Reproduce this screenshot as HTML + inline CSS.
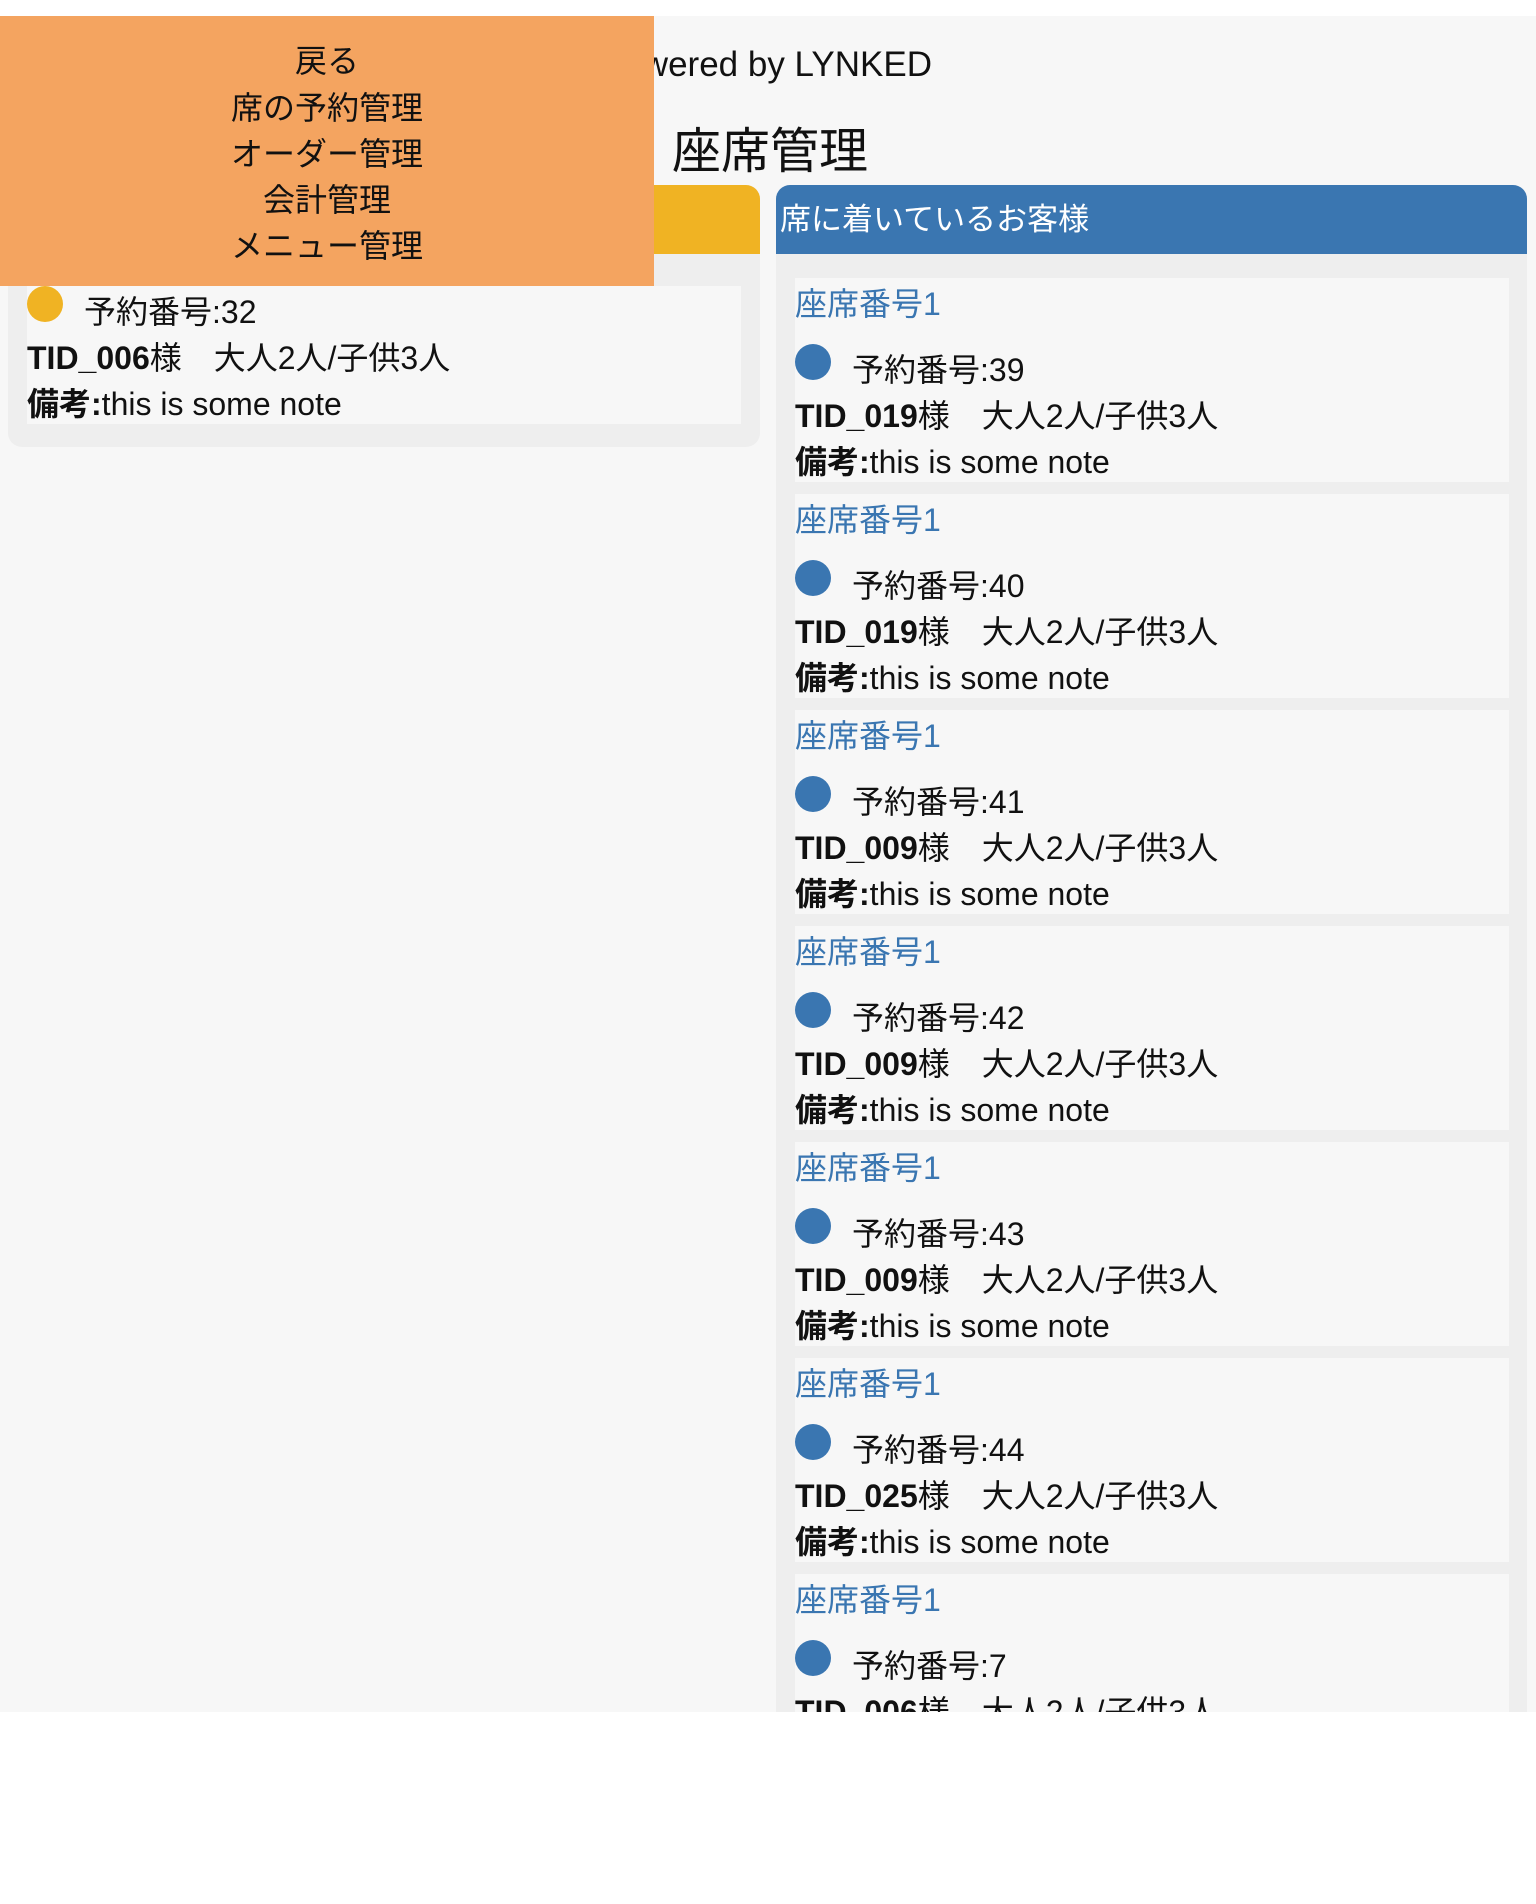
<!DOCTYPE html>
<html><head><meta charset="utf-8"><style>
*{margin:0;padding:0;box-sizing:border-box}
body{width:1536px;height:1904px;background:#fff;font-family:"Liberation Sans","Noto Sans CJK JP",sans-serif;position:relative;overflow:hidden;color:#111}
#page{position:absolute;left:0;top:16px;width:1536px;height:1696px;background:#f7f7f7;overflow:hidden}
.abs{position:absolute;white-space:nowrap}
.panel{position:absolute;background:#eeeeee;border-radius:14px;overflow:hidden}
.hd{height:69px;color:#fff;font-size:31px;line-height:69px;padding-left:4px}
.card{position:absolute;background:#f7f7f7;font-size:32px}
.card .l{position:absolute;left:0;white-space:nowrap;line-height:40px}
.dot{position:absolute;left:0;width:36px;height:36px;border-radius:50%}
b{font-weight:bold}
#menu{position:absolute;left:0;top:16px;width:654px;height:270px;background:#f4a460;text-align:center;font-size:32px}
#menu div{position:absolute;left:0;width:654px;line-height:40px}
</style></head><body>
<div id="page">
 <div class="abs" style="left:600px;top:26px;font-size:35px;line-height:46px">Powered by LYNKED</div>
 <div class="abs" style="left:672px;top:106px;font-size:49px;line-height:60px">座席管理</div>
 <div class="panel" style="left:8px;top:169px;width:752px;height:262px">
  <div class="hd" style="background:#f0b323">予約のお客様</div>
  <div class="card" style="left:19px;top:101px;width:714px;height:138px">
   <div class="dot" style="background:#f0b323;top:0px"></div>
   <div class="l" style="left:57px;top:6px">予約番号:32</div>
   <div class="l" style="top:52px"><b>TID_006</b>様　大人2人/子供3人</div>
   <div class="l" style="top:98px"><b>備考:</b>this is some note</div>
  </div>
 </div>
 <div class="panel" style="left:776px;top:169px;width:751px;height:1700px">
  <div class="hd" style="background:#3a76b1">席に着いているお客様</div>
 </div>
</div>
<div id="menu">
 <div style="top:25px">戻る</div>
 <div style="top:72px">席の予約管理</div>
 <div style="top:118px">オーダー管理</div>
 <div style="top:164px">会計管理</div>
 <div style="top:210px">メニュー管理</div>
</div>
<div id="cards" style="position:absolute;left:0;top:0;width:1536px;height:1712px;overflow:hidden">
</div>
<script>
var d=[["39","019"],["40","019"],["41","009"],["42","009"],["43","009"],["44","025"],["7","006"]];
var h="";
d.forEach(function(x,i){var t=278+i*216;
h+='<div class="card" style="left:795px;top:'+t+'px;width:714px;height:204px">'+
'<div class="l" style="top:6px;color:#3a76b1">座席番号1</div>'+
'<div class="dot" style="background:#3a76b1;top:66px"></div>'+
'<div class="l" style="left:57px;top:72px">予約番号:'+x[0]+'</div>'+
'<div class="l" style="top:118px"><b>TID_'+x[1]+'</b>様　大人2人/子供3人</div>'+
'<div class="l" style="top:164px"><b>備考:</b>this is some note</div></div>';});
document.getElementById("cards").innerHTML=h;
</script>
</body></html>
